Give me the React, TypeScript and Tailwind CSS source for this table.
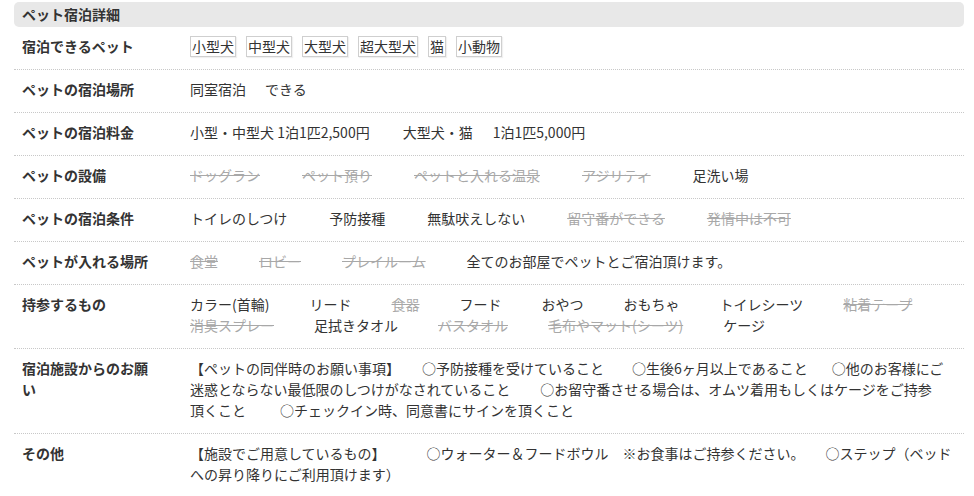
const petTypes = ["小型犬", "中型犬", "大型犬", "超大型犬", "猫", "小動物"];

type Item = { label: string; ok: boolean };

const facilities: Item[] = [
  { label: "ドッグラン", ok: false },
  { label: "ペット預り", ok: false },
  { label: "ペットと入れる温泉", ok: false },
  { label: "アジリティ", ok: false },
  { label: "足洗い場", ok: true },
];

const conditions: Item[] = [
  { label: "トイレのしつけ", ok: true },
  { label: "予防接種", ok: true },
  { label: "無駄吠えしない", ok: true },
  { label: "留守番ができる", ok: false },
  { label: "発情中は不可", ok: false },
];

const places: Item[] = [
  { label: "食堂", ok: false },
  { label: "ロビー", ok: false },
  { label: "プレイルーム", ok: false },
  { label: "全てのお部屋でペットとご宿泊頂けます。", ok: true },
];

const bring: Item[] = [
  { label: "カラー(首輪)", ok: true },
  { label: "リード", ok: true },
  { label: "食器", ok: false },
  { label: "フード", ok: true },
  { label: "おやつ", ok: true },
  { label: "おもちゃ", ok: true },
  { label: "トイレシーツ", ok: true },
  { label: "粘着テープ", ok: false },
  { label: "消臭スプレー", ok: false },
  { label: "足拭きタオル", ok: true },
  { label: "バスタオル", ok: false },
  { label: "毛布やマット(シーツ)", ok: false },
  { label: "ケージ", ok: true },
];

function Row({ label, last, children }: { label: string; last?: boolean; children: React.ReactNode }) {
  return (
    <div className={"flex pt-[9px] pb-[12px]" + (last ? "" : " border-b border-dotted border-[#c8c8c8]")}>
      <div className="w-[176px] shrink-0 pl-2 pr-[36px] font-bold leading-[21px] text-[#333]">{label}</div>
      <div className="flex-1 pr-2 leading-[21px] text-[#333]">{children}</div>
    </div>
  );
}

function Items({ items, gap }: { items: Item[]; gap: string }) {
  return (
    <div className={"flex flex-wrap " + gap}>
      {items.map((it) => (
        <span
          key={it.label}
          className={it.ok ? "text-[#333]" : "text-[#a8a8a8] line-through decoration-[#a8a8a8]"}
        >
          {it.label}
        </span>
      ))}
    </div>
  );
}

export default function App() {
  return (
    <div
      className="w-[974px] h-[496px] bg-white pt-[2px] text-[14px]"
      style={{ fontFamily: '"Noto Sans CJK JP", "Noto Sans", sans-serif' }}
    >
      <div className="ml-[14px] w-[950px]">
        {/* ── Heading ── */}
        <div className="h-[25px] rounded-[5px] bg-[#e8e8e8] pl-2 font-bold leading-[25px] text-[#333]">
          ペット宿泊詳細
        </div>

        <Row label="宿泊できるペット">
          <div className="flex gap-x-[10px]">
            {petTypes.map((p) => (
              <span
                key={p}
                className="border border-[#cfcfcf] px-[1px] leading-[19px] text-[#333] shadow-[1px_1px_1px_rgba(0,0,0,0.06)]"
              >
                {p}
              </span>
            ))}
          </div>
        </Row>

        <Row label="ペットの宿泊場所">
          <span>同室宿泊</span>
          <span className="ml-[19px]">できる</span>
        </Row>

        <Row label="ペットの宿泊料金">
          <span>小型・中型犬 1泊1匹2,500円</span>
          <span className="ml-[33px]">大型犬・猫</span>
          <span className="ml-[20px]">1泊1匹5,000円</span>
        </Row>

        <Row label="ペットの設備">
          <Items items={facilities} gap="gap-x-[42px]" />
        </Row>

        <Row label="ペットの宿泊条件">
          <Items items={conditions} gap="gap-x-[42px]" />
        </Row>

        <Row label="ペットが入れる場所">
          <Items items={places} gap="gap-x-[41px]" />
        </Row>

        <Row label="持参するもの">
          <Items items={bring} gap="gap-x-[40px]" />
        </Row>

        <Row label="宿泊施設からのお願い">
          <div className="whitespace-nowrap">
            <span>【ペットの同伴時のお願い事項】</span>
            <span className="ml-[22px]">○予防接種を受けていること</span>
            <span className="ml-[28px]">○生後6ヶ月以上であること</span>
            <span className="ml-[24px]">○他のお客様にご</span>
          </div>
          <div className="whitespace-nowrap">
            <span>迷惑とならない最低限のしつけがなされていること</span>
            <span className="ml-[30px]">○お留守番させる場合は、オムツ着用もしくはケージをご持参</span>
          </div>
          <div className="whitespace-nowrap">
            <span>頂くこと</span>
            <span className="ml-[34px]">○チェックイン時、同意書にサインを頂くこと</span>
          </div>
        </Row>

        <Row label="その他" last>
          <div className="whitespace-nowrap">
            <span>【施設でご用意しているもの】</span>
            <span className="ml-[41px]">○ウォーター＆フードボウル</span>
            <span className="ml-[14px]">※お食事はご持参ください。</span>
            <span className="ml-[21px]">○ステップ（ベッド</span>
          </div>
          <div className="whitespace-nowrap">への昇り降りにご利用頂けます）</div>
        </Row>
      </div>
    </div>
  );
}
